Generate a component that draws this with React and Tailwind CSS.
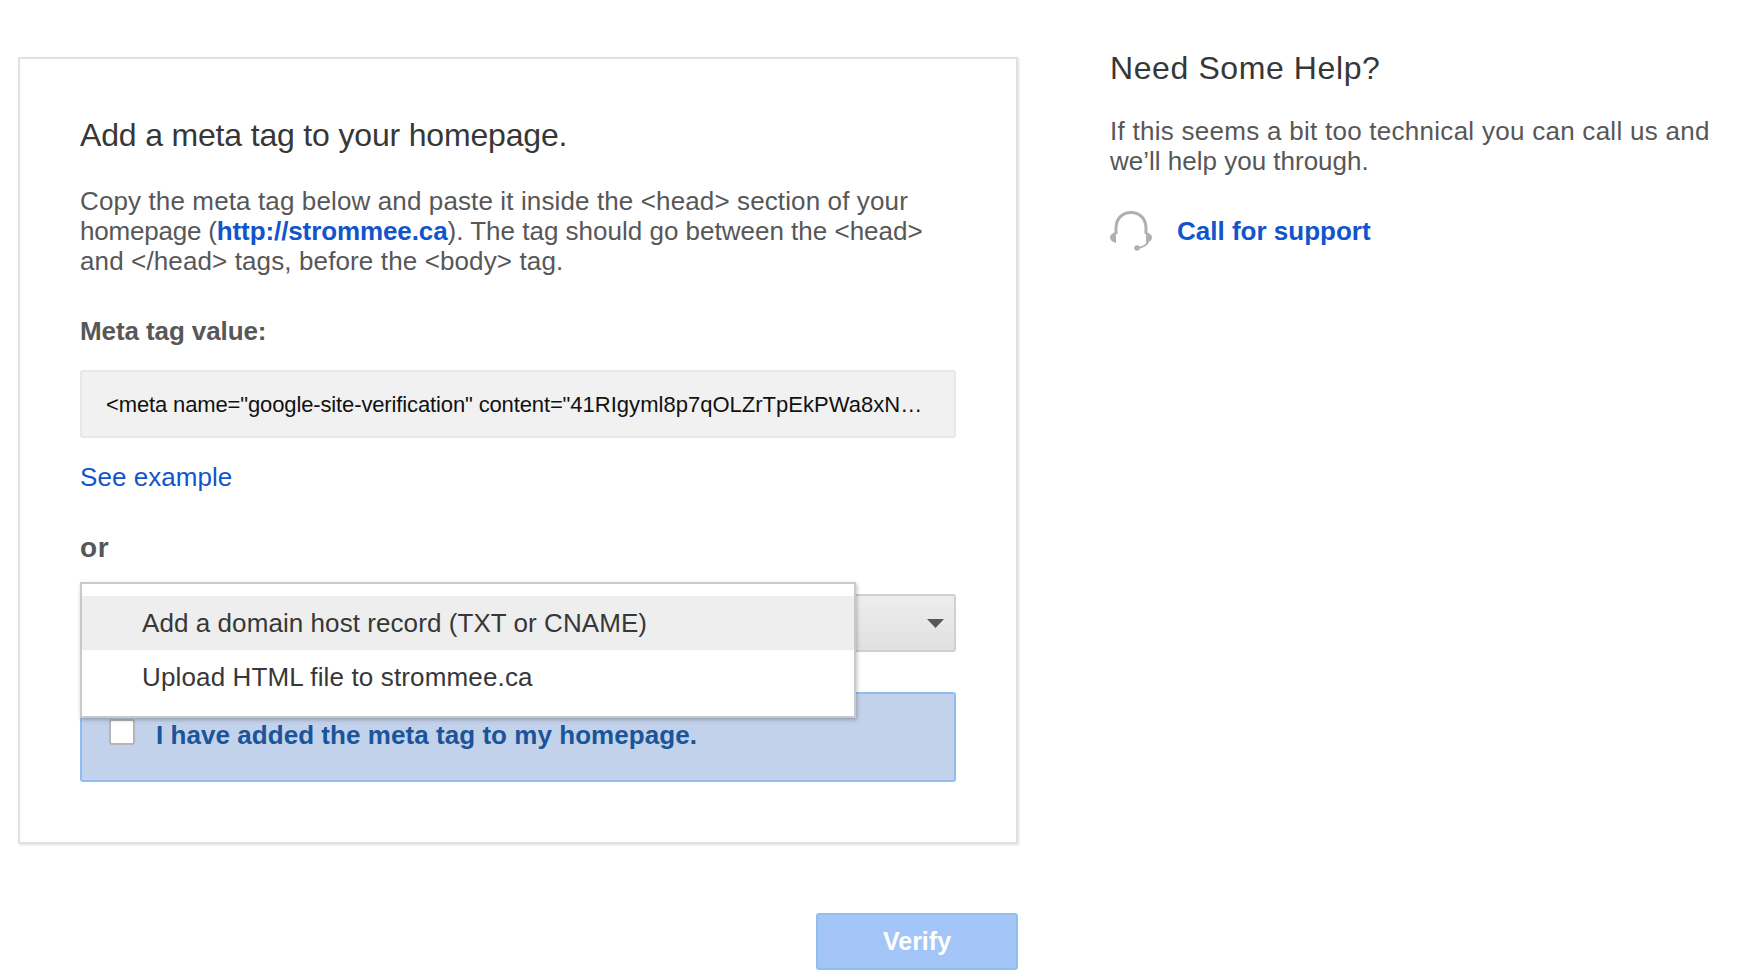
export default function App() {
  return (
    <div className="w-[1742px] h-[980px] overflow-hidden bg-white flex items-start font-['Liberation_Sans',Arial,sans-serif] text-[#575757]">
      <div className="w-[1000px] ml-[18px] mt-[57px] shrink-0">
        <div className="h-[787px] border-2 border-[#e1e1dd] bg-white pl-[60px] pr-[60px] pt-[57px] shadow-[1px_1px_2px_rgba(0,0,0,0.12)]">
          <h2 className="text-[32px] leading-[38px] text-[#373737] font-normal tracking-[-0.17px]">Add a meta tag to your homepage.</h2>
          <p className="mt-[32px] text-[26px] leading-[30px]">
            <span className="tracking-[0.12px]">Copy the meta tag below and paste it inside the &lt;head&gt; section of your</span><br />
            <span className="tracking-[-0.2px]">homepage (</span><a className="font-bold text-[#1155cc] tracking-[-0.1px]">http://strommee.ca</a>). The tag should go between the &lt;head&gt;<br />
            <span className="tracking-[0.12px]">and &lt;/head&gt; tags, before the &lt;body&gt; tag.</span>
          </p>
          <div className="mt-[40px] text-[26px] leading-[30px] font-bold tracking-[-0.1px]">Meta tag value:</div>
          <div className="mt-[24px] h-[68px] flex items-center rounded-[3px] border-2 border-[#e8e8e8] bg-[#f1f1f1] pl-[24px] pr-[25px] text-[22px] text-[#111111] whitespace-nowrap overflow-hidden">
            <span className="tracking-[-0.13px]">&lt;meta name="google-site-verification" content="</span><span className="tracking-[0.02px]">41RIgyml8p7qOLZrTpEkPWa8xN…</span>
          </div>
          <a className="block mt-[24px] text-[26px] leading-[30px] text-[#1155cc] tracking-[0.04px]">See example</a>
          <div className="mt-[41px] text-[28px] leading-[30px] font-bold tracking-[0.7px]">or</div>
          <div className="relative mt-[31px]">
            <div className="h-[58px] rounded-[3px] border-2 border-[#d0d0d0] bg-gradient-to-b from-[#eeeeee] to-[#e0e0e0] flex items-center justify-end pr-[10px]">
              <svg width="17" height="9" viewBox="0 0 17 9"><path d="M0 0H17L8.5 9Z" fill="#575757" /></svg>
            </div>
            <div className="absolute left-0 top-[-12px] z-10 h-[136px] w-[776px] border-2 border-[#c9c9c9] bg-white pt-[12px] shadow-[1px_2px_4px_rgba(0,0,0,0.25)] text-[26px] text-[#373737]">
              <div className="h-[54px] bg-[#eeeeee] flex items-center pl-[60px] tracking-[0.07px]">Add a domain host record (TXT or CNAME)</div>
              <div className="h-[54px] flex items-center pl-[60px] tracking-[0.14px]">Upload HTML file to strommee.ca</div>
            </div>
          </div>
          <div className="mt-[40px] h-[90px] rounded-[3px] border-2 border-[#8fbdf1] bg-[#c3d2eb] flex items-start pl-[27px] pt-[25px]">
            <div className="w-[26px] h-[26px] rounded-[3px] border-2 border-[#b5b5b5] bg-white shrink-0" />
            <span className="ml-[21px] mt-[1px] text-[26px] leading-[30px] font-bold text-[#1a5499] tracking-[0.05px]">I have added the meta tag to my homepage.</span>
          </div>
        </div>
        <div className="flex justify-end mt-[69px]">
          <button className="w-[202px] h-[57px] rounded-[3px] border-2 border-[#8fbfea] bg-[#a3c5f8] text-[25px] font-bold text-white">Verify</button>
        </div>
      </div>
      <div className="ml-[92px] mt-[49px] w-[640px]">
        <h2 className="text-[32px] leading-[38px] text-[#373737] font-normal tracking-[0.6px]">Need Some Help?</h2>
        <p className="mt-[29px] text-[26px] leading-[30px]">
          <span className="tracking-[0.27px]">If this seems a bit too technical you can call us and</span><br />we’ll help you through.
        </p>
        <div className="mt-[35px] flex items-center">
          <svg width="42" height="40" viewBox="0 0 42 40" className="shrink-0" fill="none">
            <path d="M6 23V17C6 8 12 1.500 21 1.500S36 8 36 17V23" stroke="#b0b0b0" strokeWidth="3" />
            <path d="M6 21V32C2 31 0 29 0 26.500S2 22 6 21Z" fill="#b0b0b0" />
            <path d="M36 21V32C40 31 42 29 42 26.500S40 22 36 21Z" fill="#b0b0b0" />
            <path d="M38 31C37 34 33 36 28 37" stroke="#b0b0b0" strokeWidth="2" />
            <circle cx="27" cy="37" r="2.800" fill="#b0b0b0" />
          </svg>
          <a className="ml-[25px] text-[26px] leading-[30px] font-bold text-[#1155cc]">Call for support</a>
        </div>
      </div>
    </div>
  );
}
